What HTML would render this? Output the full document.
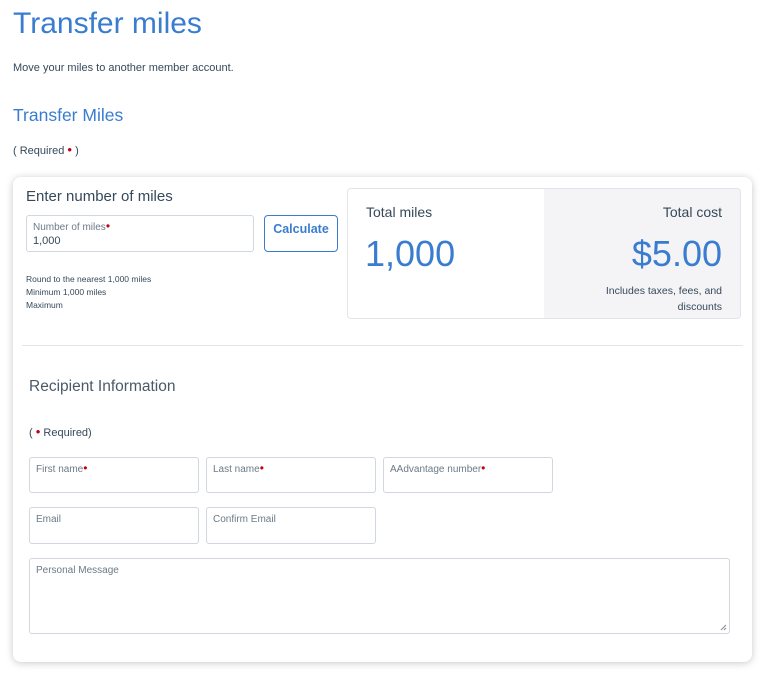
<!DOCTYPE html>
<html><head><meta charset="utf-8"><style>
*{box-sizing:border-box;margin:0;padding:0}
body{width:768px;height:683px;background:#fff;font-family:"Liberation Sans",sans-serif;position:relative;overflow:hidden;color:#36495a}
.a{position:absolute;white-space:nowrap}
.blue{color:#3a7cd0}
.dot{color:#c30019;font-size:1.2em;line-height:0}
.card{position:absolute;left:13px;top:177px;width:739px;height:485px;border-radius:8px;background:#fff;box-shadow:0 1px 8px rgba(0,0,0,.22)}
.in{position:absolute;border:1px solid #d0d7de;border-radius:3px;background:#fff}
.in span{position:absolute;left:6px;top:6px;font-size:10px;color:#6b7a88}
</style></head><body>
<div class="a blue" style="left:13px;top:7px;font-size:30px">Transfer miles</div>
<div class="a" style="left:13px;top:62px;font-size:11px;color:#36495a">Move your miles to another member account.</div>
<div class="a blue" style="left:13px;top:105px;font-size:17.5px">Transfer Miles</div>
<div class="a" style="left:13px;top:145px;font-size:11px">( Required <span class="dot">•</span> )</div>
<div class="card"></div>
<div class="a" style="left:26px;top:188px;font-size:15px">Enter number of miles</div>
<div class="in" style="left:26px;top:215px;width:228px;height:37px"><span>Number of miles<b class="dot" style="font-weight:normal">•</b></span><span style="top:19px;font-size:11px;color:#36495a">1,000</span></div>
<div class="a" style="left:264px;top:215px;width:74px;height:37px;border:1px solid #3a7cd0;border-radius:4px;color:#3a7cd0;font-weight:bold;font-size:12.5px;text-align:center;padding-top:6px">Calculate</div>
<div class="a" style="left:26px;top:273px;font-size:8.5px;line-height:13px;color:#36495a">Round to the nearest 1,000 miles<br>Minimum 1,000 miles<br>Maximum</div>
<div class="a" style="left:347px;top:188px;width:394px;height:131px;border:1px solid #e1e4e8;border-radius:4px;overflow:hidden">
 <div style="position:absolute;left:196px;top:0;width:198px;height:131px;background:#f4f4f6"></div>
 <div class="a" style="left:18px;top:15px;font-size:14px">Total miles</div>
 <div class="a blue" style="left:17px;top:44px;font-size:36px">1,000</div>
 <div class="a" style="right:18px;top:15px;font-size:14px">Total cost</div>
 <div class="a blue" style="right:18px;top:44px;font-size:36px">$5.00</div>
 <div class="a" style="right:18px;top:94px;font-size:10.5px;line-height:16px;text-align:right">Includes taxes, fees, and<br>discounts</div>
</div>
<div class="a" style="left:22px;top:345px;width:721px;height:1px;background:#e3e6e9"></div>
<div class="a" style="left:29px;top:378px;font-size:15.5px;color:#4a5a68">Recipient Information</div>
<div class="a" style="left:29px;top:427px;font-size:11px">( <span class="dot">•</span> Required)</div>
<div class="in" style="left:29px;top:457px;width:170px;height:36px"><span>First name<b class="dot" style="font-weight:normal">•</b></span></div>
<div class="in" style="left:206px;top:457px;width:170px;height:36px"><span>Last name<b class="dot" style="font-weight:normal">•</b></span></div>
<div class="in" style="left:383px;top:457px;width:170px;height:36px"><span>AAdvantage number<b class="dot" style="font-weight:normal">•</b></span></div>
<div class="in" style="left:29px;top:507px;width:170px;height:37px"><span>Email</span></div>
<div class="in" style="left:206px;top:507px;width:170px;height:37px"><span>Confirm Email</span></div>
<div class="in" style="left:29px;top:558px;width:701px;height:76px"><span>Personal Message</span>
<svg style="position:absolute;right:2px;bottom:2px" width="7" height="7"><path d="M1 6L6 1M4 6L6 4" stroke="#888" stroke-width="1"/></svg></div>
</body></html>
